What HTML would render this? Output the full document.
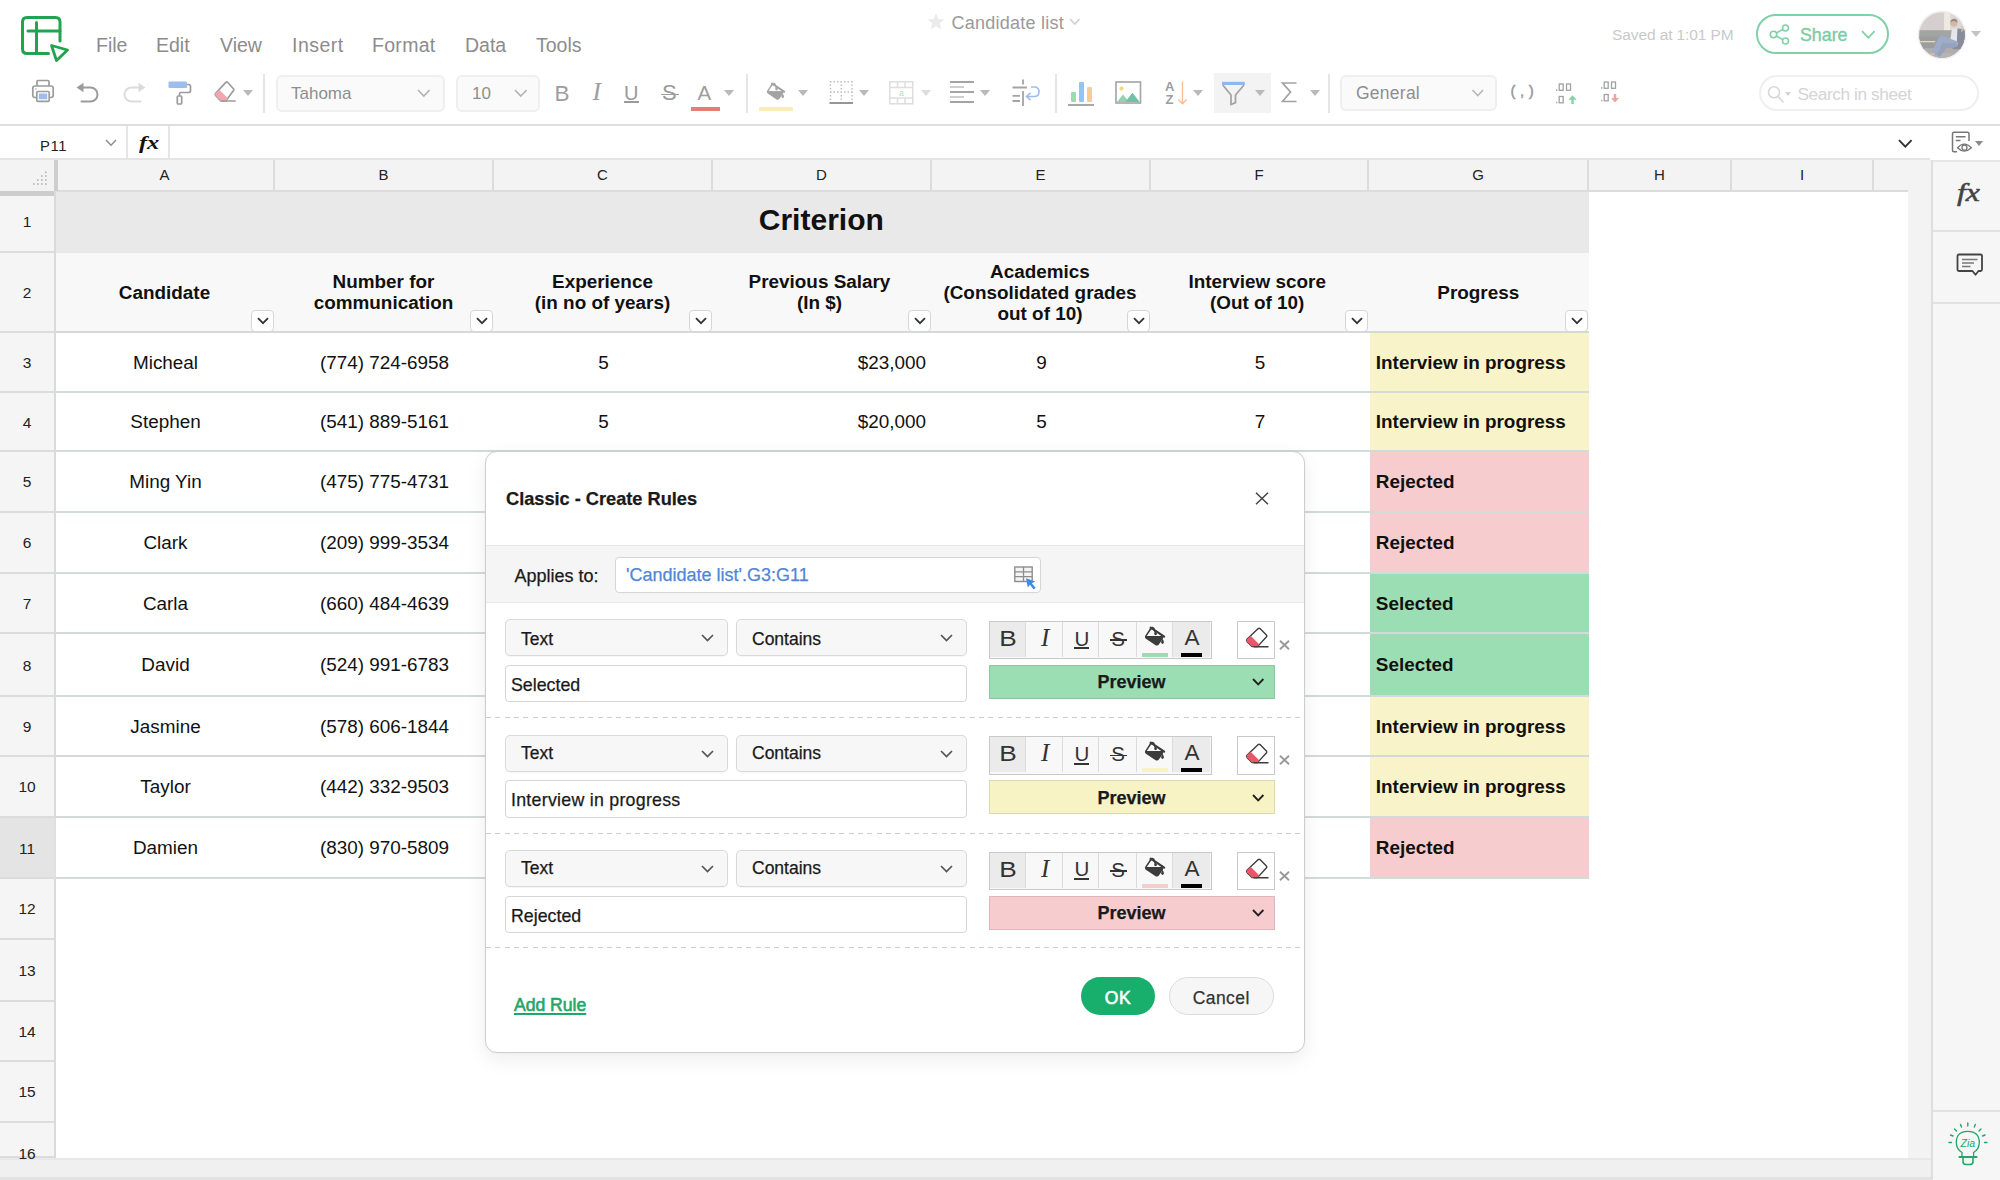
<!DOCTYPE html>
<html lang="en">
<head>
<meta charset="utf-8">
<title>Candidate list</title>
<style>
*{box-sizing:border-box;margin:0;padding:0}
html,body{width:2000px;height:1180px;overflow:hidden;background:#fff}
body{font-family:"Liberation Sans",sans-serif;color:#111;position:relative}
.abs{position:absolute}
#page{position:absolute;left:0;top:0;width:2000px;height:1180px;overflow:hidden;background:#fff}
svg{display:block;overflow:visible}
/* top bar */
#topbar{position:absolute;left:0;top:0;width:2000px;height:126px;background:#fff;border-bottom:2px solid #dedede}
.menu{position:absolute;top:33px;font-size:19.5px;line-height:24px;color:#8c8c8c;white-space:nowrap}
.tri{position:absolute;width:0;height:0;border-left:5px solid transparent;border-right:5px solid transparent;border-top:6px solid #b9b9b9}
.vsep{position:absolute;width:2px;background:#e6e6e6}
/* formula bar */
#fbar{position:absolute;left:0;top:126px;width:1932px;height:34px;background:#fff;border-bottom:2px solid #e4e4e4}
/* column headers */
#colhdr{position:absolute;left:0;top:160px;width:1908px;height:32px;background:#f3f3f3;border-bottom:2px solid #dcdcdc}
.ch{position:absolute;top:0;height:30px;line-height:29px;text-align:center;font-size:15px;color:#222;border-right:2px solid #dcdcdc}
/* row headers */
.rh{position:absolute;left:0;width:56px;background:#f5f5f5;border-bottom:2px solid #dcdcdc;border-right:2px solid #dadada;font-size:15.5px;color:#222}
.rh span{position:absolute;left:0;width:54px;text-align:center;line-height:20px}
/* cells */
.c{position:absolute;font-size:18.9px;white-space:nowrap;color:#111;line-height:22px}
.cc{text-align:center}
.b{font-weight:bold}
.hl{position:absolute;height:2px;background:#d3dada}
.fb{position:absolute;width:23px;height:22px;background:#fff;border:1px solid #d6d6d6;border-radius:4px}
.fb svg{position:absolute;left:4.500px;top:6px}
</style>
</head>
<body>
<div id="page">
<!-- scroll strips / side panel -->
<div class="abs" style="left:1908px;top:160px;width:24px;height:998px;background:#f3f3f3"></div>
<div class="abs" style="left:0;top:1158px;width:1932px;height:22px;background:#f0f0f0;border-top:2px solid #e8e8e8"></div>
<div class="abs" style="left:0;top:1177px;width:1932px;height:3px;background:#e2e2e2"></div>
<div id="side" class="abs" style="left:1931px;top:160px;width:69px;height:1020px;background:#f6f6f6;border-left:2px solid #dedede">
  <div class="abs" style="left:0;top:0;width:67px;height:2px;background:#e6e6e6"></div>
  <div class="abs" style="left:0;top:70px;width:67px;height:2px;background:#e2e2e2"></div>
  <div class="abs" style="left:0;top:142px;width:67px;height:2px;background:#e2e2e2"></div>
  <div class="abs" style="left:0;top:950px;width:67px;height:2px;background:#e2e2e2"></div>
  <!-- fx -->
  <div class="abs" style="left:24px;top:16px;font-family:'Liberation Serif',serif;font-style:italic;font-size:24.500px;line-height:34px;color:#444;letter-spacing:0;white-space:nowrap;transform:scaleX(1.3);transform-origin:0 50%;-webkit-text-stroke:.5px #444">fx</div>
  <!-- comment -->
  <svg class="abs" style="left:23px;top:93px" width="28" height="25" viewBox="0 0 28 25" fill="none" stroke="#444" stroke-width="1.800" stroke-linejoin="round">
  <path d="M3 1.500 H24.500 Q26 1.500 26 3 V16.500 Q26 18 24.500 18 H22.500 L19.500 21.800 L16.500 18 H3 Q1.500 18 1.500 16.500 V3 Q1.500 1.500 3 1.500 Z"/>
  <path d="M6 6.500 H21.500" stroke="#777" stroke-width="1.500"/><path d="M6 10 H18" stroke="#777" stroke-width="1.500"/><path d="M6 13.500 H14.500" stroke="#777" stroke-width="1.500"/>
  </svg>
  <!-- zia bulb -->
  <svg class="abs" style="left:14px;top:961px" width="44" height="48" viewBox="0 0 44 48" fill="none" stroke="#1fa866" stroke-width="1.300" stroke-linecap="round">
  <path d="M15 34.500 V31.500 Q9.300 28 9.300 21.500 Q9.300 10.300 20.800 10.300 Q32.300 10.300 32.300 21.500 Q32.300 28 26.600 31.500 V34.500"/>
  <path d="M12.500 36 H29.500" stroke-width="2.200"/>
  <path d="M16 37 V40.500 Q16 43.500 19 43.500 H23 Q26 43.500 26 40.500 V37" stroke-width="1.600"/>
  <path d="M20.800 2 V5 M13.500 3.500 L14.500 6 M28.300 3.500 L27.300 6 M7.500 8 L9.500 10 M34 8 L32 10 M3.500 14 L6 15 M38 14 L35.500 15 M2 21.500 H4.500 M37.500 21.500 H40" stroke-width="1.400"/>
  <text x="20.800" y="25.500" font-size="10.500" text-anchor="middle" fill="#1fa866" stroke="none" style="font-family:'Liberation Sans',sans-serif;font-style:italic">Zia</text>
  </svg>
</div>
<div id="grid">
<div class="abs" style="left:56px;top:192px;width:1533px;height:60.500px;background:#e9e9e9"></div>
<div class="abs" style="left:56px;top:252.500px;width:1533px;height:78px;background:#f8f8f8"></div>
<div class="abs" style="left:1370px;top:332.5px;width:219px;height:58.5px;background:#f8f3c8"></div>
<div class="abs" style="left:1370px;top:393px;width:219px;height:57px;background:#f8f3c8"></div>
<div class="abs" style="left:1370px;top:452px;width:219px;height:58.5px;background:#f6cccf"></div>
<div class="abs" style="left:1370px;top:512.5px;width:219px;height:59.0px;background:#f6cccf"></div>
<div class="abs" style="left:1370px;top:573.5px;width:219px;height:58.5px;background:#9cdeb4"></div>
<div class="abs" style="left:1370px;top:634px;width:219px;height:61px;background:#9cdeb4"></div>
<div class="abs" style="left:1370px;top:697px;width:219px;height:58px;background:#f8f3c8"></div>
<div class="abs" style="left:1370px;top:757px;width:219px;height:58.700000000000045px;background:#f8f3c8"></div>
<div class="abs" style="left:1370px;top:817.7px;width:219px;height:59.299999999999955px;background:#f6cccf"></div>
<div class="hl" style="left:56px;top:330.5px;width:1533px"></div>
<div class="hl" style="left:56px;top:391px;width:1533px"></div>
<div class="hl" style="left:56px;top:450px;width:1533px"></div>
<div class="hl" style="left:56px;top:510.5px;width:1533px"></div>
<div class="hl" style="left:56px;top:571.5px;width:1533px"></div>
<div class="hl" style="left:56px;top:632px;width:1533px"></div>
<div class="hl" style="left:56px;top:695px;width:1533px"></div>
<div class="hl" style="left:56px;top:755px;width:1533px"></div>
<div class="hl" style="left:56px;top:815.7px;width:1533px"></div>
<div class="hl" style="left:56px;top:877px;width:1533px"></div>
<div id="colhdr">
<div class="ch" style="left:56px;width:219px">A</div>
<div class="ch" style="left:275px;width:219px">B</div>
<div class="ch" style="left:494px;width:219px">C</div>
<div class="ch" style="left:713px;width:219px">D</div>
<div class="ch" style="left:932px;width:219px">E</div>
<div class="ch" style="left:1151px;width:218px">F</div>
<div class="ch" style="left:1369px;width:220px">G</div>
<div class="ch" style="left:1589px;width:143px">H</div>
<div class="ch" style="left:1732px;width:142px">I</div>
<div class="abs" style="left:0;top:0;width:54px;height:31px;background:#f3f3f3"></div>
<div class="abs" style="left:54px;top:0;width:4px;height:31px;background:#cdcdcd"></div>
<svg class="abs" style="left:0;top:0" width="56" height="32" viewBox="0 0 56 32" fill="#b4b4b4"><rect x="45" y="11.5" width="1.600" height="1.600"/><rect x="45" y="15.2" width="1.600" height="1.600"/><rect x="41" y="15.2" width="1.600" height="1.600"/><rect x="45" y="19.2" width="1.600" height="1.600"/><rect x="41" y="19.2" width="1.600" height="1.600"/><rect x="37" y="19.2" width="1.600" height="1.600"/><rect x="45" y="23.2" width="1.600" height="1.600"/><rect x="41" y="23.2" width="1.600" height="1.600"/><rect x="37" y="23.2" width="1.600" height="1.600"/><rect x="33" y="23.2" width="1.600" height="1.600"/></svg>
</div>
<div class="rh" style="top:192px;height:61px"><span style="top:20px">1</span></div>
<div class="rh" style="top:253px;height:79.5px"><span style="top:30px">2</span></div>
<div class="rh" style="top:332.5px;height:60.5px"><span style="top:20px">3</span></div>
<div class="rh" style="top:393px;height:59px"><span style="top:20px">4</span></div>
<div class="rh" style="top:452px;height:60.5px"><span style="top:20px">5</span></div>
<div class="rh" style="top:512.5px;height:61.0px"><span style="top:20px">6</span></div>
<div class="rh" style="top:573.5px;height:60.5px"><span style="top:20px">7</span></div>
<div class="rh" style="top:634px;height:63px"><span style="top:22px">8</span></div>
<div class="rh" style="top:697px;height:60px"><span style="top:20px">9</span></div>
<div class="rh" style="top:757px;height:60.700000000000045px"><span style="top:20px">10</span></div>
<div class="rh" style="top:817.7px;height:61.299999999999955px;background:#e4e4e4;border-right-color:#e0e0e0"><span style="top:21px">11</span></div>
<div class="rh" style="top:879px;height:60.60000000000002px"><span style="top:20px">12</span></div>
<div class="rh" style="top:939.6px;height:62.10000000000002px"><span style="top:21px">13</span></div>
<div class="rh" style="top:1001.7px;height:60.700000000000045px"><span style="top:20px">14</span></div>
<div class="rh" style="top:1062.4px;height:60.59999999999991px"><span style="top:20px">15</span></div>
<div class="rh" style="top:1123px;height:35px"><span style="top:21px">16</span></div>
<div class="abs" style="left:0;top:191px;width:54px;height:5px;background:#cdcdcd"></div>
<div class="c b cc" style="left:54.800px;width:1533px;top:203px;font-size:30px;line-height:34px">Criterion</div>
<div class="c b cc" style="left:35px;width:259px;top:281.6px;line-height:21px">Candidate</div>
<div class="fb" style="left:251px;top:310px"><svg width="12" height="8" viewBox="0 0 12 8"><path d="M1 1.2 L6 6.2 L11 1.2" fill="none" stroke="#333" stroke-width="1.8"/></svg></div>
<div class="c b cc" style="left:254px;width:259px;top:271.1px;line-height:21px">Number for<br>communication</div>
<div class="fb" style="left:470px;top:310px"><svg width="12" height="8" viewBox="0 0 12 8"><path d="M1 1.2 L6 6.2 L11 1.2" fill="none" stroke="#333" stroke-width="1.8"/></svg></div>
<div class="c b cc" style="left:473px;width:259px;top:271.1px;line-height:21px">Experience<br>(in no of years)</div>
<div class="fb" style="left:689px;top:310px"><svg width="12" height="8" viewBox="0 0 12 8"><path d="M1 1.2 L6 6.2 L11 1.2" fill="none" stroke="#333" stroke-width="1.8"/></svg></div>
<div class="c b cc" style="left:690px;width:259px;top:271.1px;line-height:21px">Previous Salary<br>(In $)</div>
<div class="fb" style="left:908px;top:310px"><svg width="12" height="8" viewBox="0 0 12 8"><path d="M1 1.2 L6 6.2 L11 1.2" fill="none" stroke="#333" stroke-width="1.8"/></svg></div>
<div class="c b cc" style="left:910.5px;width:259px;top:260.6px;line-height:21px">Academics<br>(Consolidated grades<br>out of 10)</div>
<div class="fb" style="left:1127px;top:310px"><svg width="12" height="8" viewBox="0 0 12 8"><path d="M1 1.2 L6 6.2 L11 1.2" fill="none" stroke="#333" stroke-width="1.8"/></svg></div>
<div class="c b cc" style="left:1128.2px;width:258px;top:271.1px;line-height:21px">Interview score<br>(Out of 10)</div>
<div class="fb" style="left:1345px;top:310px"><svg width="12" height="8" viewBox="0 0 12 8"><path d="M1 1.2 L6 6.2 L11 1.2" fill="none" stroke="#333" stroke-width="1.8"/></svg></div>
<div class="c b cc" style="left:1348.3px;width:260px;top:281.6px;line-height:21px">Progress</div>
<div class="fb" style="left:1565px;top:310px"><svg width="12" height="8" viewBox="0 0 12 8"><path d="M1 1.2 L6 6.2 L11 1.2" fill="none" stroke="#333" stroke-width="1.8"/></svg></div>
<div class="c cc" style="left:56px;width:219px;top:351.6px">Micheal</div>
<div class="c cc" style="left:275px;width:219px;top:351.6px">(774) 724-6958</div>
<div class="c cc" style="left:494px;width:219px;top:351.6px">5</div>
<div class="c" style="left:713px;width:213px;top:351.6px;text-align:right">$23,000</div>
<div class="c cc" style="left:932px;width:219px;top:351.6px">9</div>
<div class="c cc" style="left:1151px;width:218px;top:351.6px">5</div>
<div class="c b" style="left:1375.800px;top:351.6px">Interview in progress</div>
<div class="c cc" style="left:56px;width:219px;top:411.3px">Stephen</div>
<div class="c cc" style="left:275px;width:219px;top:411.3px">(541) 889-5161</div>
<div class="c cc" style="left:494px;width:219px;top:411.3px">5</div>
<div class="c" style="left:713px;width:213px;top:411.3px;text-align:right">$20,000</div>
<div class="c cc" style="left:932px;width:219px;top:411.3px">5</div>
<div class="c cc" style="left:1151px;width:218px;top:411.3px">7</div>
<div class="c b" style="left:1375.800px;top:411.3px">Interview in progress</div>
<div class="c cc" style="left:56px;width:219px;top:471.1px">Ming Yin</div>
<div class="c cc" style="left:275px;width:219px;top:471.1px">(475) 775-4731</div>
<div class="c b" style="left:1375.800px;top:471.1px">Rejected</div>
<div class="c cc" style="left:56px;width:219px;top:531.8px">Clark</div>
<div class="c cc" style="left:275px;width:219px;top:531.8px">(209) 999-3534</div>
<div class="c b" style="left:1375.800px;top:531.8px">Rejected</div>
<div class="c cc" style="left:56px;width:219px;top:592.5px">Carla</div>
<div class="c cc" style="left:275px;width:219px;top:592.5px">(660) 484-4639</div>
<div class="c b" style="left:1375.800px;top:592.5px">Selected</div>
<div class="c cc" style="left:56px;width:219px;top:654.3px">David</div>
<div class="c cc" style="left:275px;width:219px;top:654.3px">(524) 991-6783</div>
<div class="c b" style="left:1375.800px;top:654.3px">Selected</div>
<div class="c cc" style="left:56px;width:219px;top:715.8px">Jasmine</div>
<div class="c cc" style="left:275px;width:219px;top:715.8px">(578) 606-1844</div>
<div class="c b" style="left:1375.800px;top:715.8px">Interview in progress</div>
<div class="c cc" style="left:56px;width:219px;top:776.1px">Taylor</div>
<div class="c cc" style="left:275px;width:219px;top:776.1px">(442) 332-9503</div>
<div class="c b" style="left:1375.800px;top:776.1px">Interview in progress</div>
<div class="c cc" style="left:56px;width:219px;top:837.1px">Damien</div>
<div class="c cc" style="left:275px;width:219px;top:837.1px">(830) 970-5809</div>
<div class="c b" style="left:1375.800px;top:837.1px">Rejected</div>
</div>
<div id="topbar">
<!-- logo -->
<svg class="abs" style="left:18px;top:12px" width="56" height="54" viewBox="0 0 56 54" fill="none" stroke="#22a350" stroke-width="3" stroke-linecap="round" stroke-linejoin="round">
<path d="M30.5 41.5 H9 Q4.5 41.5 4.500 37 V10 Q4.5 5.500 9 5.500 H37.500 Q42 5.500 42 10 V29"/>
<path d="M18.500 10.500 V41"/><path d="M10 19 H42"/>
<path d="M33.500 33.500 L49.500 38 L38.500 48.500 Z" stroke-width="2.800"/>
</svg>
<!-- menus -->
<div class="menu" style="left:96px">File</div>
<div class="menu" style="left:156px">Edit</div>
<div class="menu" style="left:220px">View</div>
<div class="menu" style="left:292px;letter-spacing:.5px">Insert</div>
<div class="menu" style="left:372px;letter-spacing:.3px">Format</div>
<div class="menu" style="left:465px">Data</div>
<div class="menu" style="left:536px">Tools</div>
<!-- title -->
<svg class="abs" style="left:927px;top:13px" width="18" height="17" viewBox="0 0 18 17"><path d="M9 0.500 L11.400 6 L17.500 6.500 L12.900 10.400 L14.300 16.300 L9 13.200 L3.700 16.300 L5.100 10.400 L0.500 6.500 L6.600 6 Z" fill="#ebebeb"/></svg>
<div class="abs" style="left:951.500px;top:10.600px;font-size:18px;line-height:24px;color:#9a9a9a;white-space:nowrap;letter-spacing:.25px">Candidate list</div>
<svg class="abs" style="left:1069px;top:18px" width="12" height="8" viewBox="0 0 12 8"><path d="M1 1 L5.800 6 L10.600 1" fill="none" stroke="#cfcfcf" stroke-width="1.600"/></svg>
<!-- saved -->
<div class="abs" style="left:1612px;top:24px;font-size:15.500px;line-height:22px;color:#c9c9c9;white-space:nowrap;letter-spacing:-.1px">Saved at 1:01 PM</div>
<!-- share -->
<div class="abs" style="left:1756px;top:14px;width:133px;height:40px;border:2px solid #80d0a8;border-radius:20px;background:#fff"></div>
<svg class="abs" style="left:1769px;top:24px" width="22" height="21" viewBox="0 0 22 21" fill="none" stroke="#80d0a8" stroke-width="1.600"><circle cx="4.500" cy="10.500" r="3.200"/><circle cx="16.500" cy="4" r="3"/><circle cx="16.500" cy="17" r="3"/><path d="M7.300 9 L13.800 5.400 M7.300 12 L13.800 15.600"/></svg>
<div class="abs" style="left:1800px;top:23.200px;font-size:17.800px;line-height:24px;color:#7ccda4;white-space:nowrap;letter-spacing:0;-webkit-text-stroke:.4px #7ccda4">Share</div>
<svg class="abs" style="left:1861px;top:30px" width="15" height="10" viewBox="0 0 15 10"><path d="M1 1.200 L7.300 7.800 L13.600 1.200" fill="none" stroke="#80d0a8" stroke-width="1.800"/></svg>
<!-- avatar -->
<svg class="abs" style="left:1917px;top:10px" width="50" height="50" viewBox="-2.200 -2.200 50 50">
<defs><clipPath id="avc"><circle cx="22.800" cy="22.800" r="22.800"/></clipPath></defs>
<circle cx="22.800" cy="22.800" r="24.300" fill="#efefef"/>
<g clip-path="url(#avc)">
<rect x="0" y="0" width="46" height="46" fill="#cdc5c6"/>
<rect x="24.900" y="0" width="6.500" height="20" fill="#ece6da"/>
<rect x="31.400" y="0" width="15" height="20" fill="#d6d0cc"/>
<rect x="0" y="18" width="46" height="19" fill="#8e9290"/>
<rect x="0" y="24" width="24" height="13" fill="#858988"/>
<rect x="0" y="36" width="46" height="10" fill="#9f9d9c"/>
<rect x="0" y="41" width="46" height="5" fill="#a8a5a3"/>
<path d="M0 29.400 H16" stroke="#e6cfb8" stroke-width="1.300"/>
<path d="M38 16.300 L46 17 V37 H33 L37.400 30 Z" fill="#6f7585"/>
<path d="M32.600 17.200 L38.200 16.300 L37.600 30.500 L31.200 27.500 Z" fill="#e3e1ea"/>
<path d="M36 31.500 L22.500 26.500 L15.500 40.500" stroke="#8a9abb" stroke-width="6" fill="none" stroke-linejoin="round" stroke-linecap="round"/>
<path d="M35 33 L26 33.500 L20 42" stroke="#7f8fb2" stroke-width="4.500" fill="none" stroke-linejoin="round" stroke-linecap="round"/>
<ellipse cx="13.200" cy="42" rx="2.600" ry="1.500" fill="#d4a78c"/>
<circle cx="34.600" cy="11" r="3.600" fill="#c9a898"/>
<path d="M31 10 Q32 6 35.500 6.500 Q38.500 7 38.200 10.500 Q36 8.500 33.500 9 Z" fill="#86705f"/>
<path d="M42.500 13 L44.500 18 L42 20 Z" fill="#d6ab93"/>
<rect x="0" y="0" width="46" height="46" fill="#fff" opacity=".18"/>
</g>
</svg>
<div class="tri" style="left:1971px;top:31px;border-top-color:#c4c4c4"></div>
</div>
<div id="toolbar" class="abs" style="left:0;top:0;width:2000px;height:124px">
<!-- print -->
<svg class="abs" style="left:31px;top:79px" width="24" height="24" viewBox="0 0 24 24" fill="none" stroke="#9c9c9c" stroke-width="1.700" stroke-linejoin="round">
<path d="M6 7 V2.500 Q6 1.500 7 1.500 H17 Q18 1.500 18 2.500 V7"/>
<rect x="1.800" y="7" width="20.400" height="11.500" rx="2.200"/>
<rect x="5.800" y="12.500" width="12.400" height="9.800" rx="1" fill="#fff"/>
<rect x="7.800" y="14.500" width="8.400" height="5.800" fill="#9dbdee" stroke="none"/>
<path d="M4.500 10 h1" stroke-width="1.400"/>
</svg>
<!-- undo -->
<svg class="abs" style="left:75px;top:80px" width="26" height="24" viewBox="0 0 26 24" fill="none" stroke="#9c9c9c" stroke-width="2">
<path d="M5 7.500 H15.500 A7 7 0 0 1 15.500 21.500 H6.500" stroke-linecap="round"/>
<path d="M1.500 7.500 L8.500 2.800 V12.200 Z" fill="#9c9c9c" stroke="none"/>
</svg>
<!-- redo -->
<svg class="abs" style="left:121px;top:80px" width="26" height="24" viewBox="0 0 26 24" fill="none" stroke="#dcdcdc" stroke-width="2">
<path d="M21 7.500 H10.500 A7 7 0 0 0 10.500 21.500 H19.500" stroke-linecap="round"/>
<path d="M24.500 7.500 L17.500 2.800 V12.200 Z" fill="#dcdcdc" stroke="none"/>
</svg>
<!-- paint roller -->
<svg class="abs" style="left:167px;top:80px" width="26" height="26" viewBox="0 0 26 26" fill="none" stroke="#9c9c9c" stroke-width="1.700" stroke-linejoin="round">
<rect x="1.500" y="1.500" width="18.500" height="6.500" rx="1" fill="#9dbdee" stroke="none"/>
<path d="M20 4.500 H21.500 Q23.500 4.500 23.500 6.500 V10.500 Q23.500 12.500 21.500 12.500 H14 Q12.500 12.500 12.500 14 V16"/>
<rect x="10.300" y="16" width="4.400" height="8" rx="1"/>
</svg>
<!-- eraser -->
<svg class="abs" style="left:213px;top:80px" width="24" height="24" viewBox="0 0 24 24" fill="none" stroke="#9c9c9c" stroke-width="1.700" stroke-linejoin="round">
<path d="M12.800 2.300 L2.600 13.300 Q1.700 14.400 2.600 15.400 L7.800 20.800 H13 L20.500 10.600 Q21.300 9.600 20.400 8.700 L14.600 2.300 Q13.700 1.500 12.800 2.300 Z" fill="#fff"/>
<path d="M6.300 9.800 L14.800 18.200 L13 20.800 H7.800 L2.600 15.400 Q1.700 14.400 2.600 13.300 Z" fill="#f2a6ae" stroke="none"/>
<path d="M9 21 H22" stroke-linecap="round"/>
</svg>
<div class="tri" style="left:243px;top:90px"></div>
<div class="vsep" style="left:263px;top:74px;height:39px"></div>
<!-- font box -->
<div class="abs" style="left:276px;top:75px;width:169px;height:37px;border:2px solid #efefef;border-radius:6px;background:#fafafa"></div>
<div class="abs" style="left:291px;top:82.600px;font-size:17px;line-height:22px;color:#8e8e8e;white-space:nowrap">Tahoma</div>
<svg class="abs" style="left:417px;top:89px" width="14" height="9" viewBox="0 0 14 9"><path d="M1 1 L6.800 7 L12.600 1" fill="none" stroke="#b4b4b4" stroke-width="1.700"/></svg>
<!-- size box -->
<div class="abs" style="left:456px;top:75px;width:84px;height:37px;border:2px solid #efefef;border-radius:6px;background:#fafafa"></div>
<div class="abs" style="left:472px;top:82.600px;font-size:17px;line-height:22px;color:#8e8e8e;white-space:nowrap">10</div>
<svg class="abs" style="left:514px;top:89px" width="14" height="9" viewBox="0 0 14 9"><path d="M1 1 L6.800 7 L12.600 1" fill="none" stroke="#b4b4b4" stroke-width="1.700"/></svg>
<!-- B I U S A -->
<div class="abs" style="left:554.500px;top:79.500px;font-size:22.500px;line-height:28px;color:#9d9d9d">B</div>
<div class="abs" style="left:592.500px;top:78px;font-size:25.500px;line-height:28px;color:#9d9d9d;font-family:'Liberation Serif',serif;font-style:italic">I</div>
<div class="abs" style="left:624px;top:81px;font-size:20px;line-height:24px;color:#9a9a9a">U</div>
<div class="abs" style="left:624px;top:101px;width:15px;height:2px;background:#9a9a9a"></div>
<div class="abs" style="left:662px;top:80px;font-size:22px;line-height:26px;color:#9a9a9a">S</div>
<div class="abs" style="left:661px;top:93.500px;width:17.500px;height:1.300px;background:#9d9d9d"></div>
<div class="abs" style="left:697.500px;top:79.700px;font-size:20.500px;line-height:26px;color:#9d9d9d">A</div>
<div class="abs" style="left:691px;top:107px;width:29px;height:4px;background:#e67c7c"></div>
<div class="tri" style="left:724px;top:90px"></div>
<div class="vsep" style="left:746px;top:74px;height:39px"></div>
</div>
<div id="toolbar2" class="abs" style="left:0;top:0;width:2000px;height:124px">
<!-- paint bucket -->
<svg class="abs" style="left:767px;top:82.800px" width="21.600" height="19.800" viewBox="0 0 24 22" fill="none">
<defs><clipPath id="bk1"><rect x="-7.400" y="-5.400" width="14.800" height="11" rx="2" transform="translate(9.300 9.700) rotate(34)"/></clipPath></defs>
<rect x="0" y="9" width="24" height="13" fill="#a3a3a3" clip-path="url(#bk1)"/>
<rect x="-7.400" y="-5.400" width="14.800" height="11" rx="2" transform="translate(9.300 9.700) rotate(34)" stroke="#a3a3a3" stroke-width="1.600"/>
<path d="M-8.200 -5.600 H8.200" transform="translate(9.300 9.700) rotate(34)" stroke="#a3a3a3" stroke-width="2.100" stroke-linecap="round"/>
<path d="M5.200 1.800 Q6.800 -0.600 8.800 1.200 L10.600 6.400" stroke="#a3a3a3" stroke-width="1.500" stroke-linecap="round"/>
<circle cx="10.600" cy="6.800" r="1.400" fill="#a3a3a3"/>
<path d="M17.500 11.800 Q20.400 16.200 17.500 17 Q14.600 16.200 17.500 11.800 Z" fill="#a3a3a3"/>
</svg>
<div class="abs" style="left:759px;top:107px;width:34px;height:3.500px;background:#fcedb8"></div>
<div class="tri" style="left:798px;top:90px"></div>
<!-- borders -->
<svg class="abs" style="left:829px;top:80px" width="25" height="25" viewBox="0 0 25 25" fill="none" stroke="#bdbdbd" stroke-width="1.400">
<path d="M1.500 1 V22 M23 1 V22 M12.300 1 V22 M1 1.700 H24 M1 12 H24" stroke-dasharray="1.500 2"/>
<path d="M0.500 23 H24" stroke="#919191" stroke-width="1.900"/>
</svg>
<div class="tri" style="left:859px;top:90px"></div>
<!-- merge -->
<svg class="abs" style="left:889px;top:81px" width="25" height="24" viewBox="0 0 25 24" fill="none" stroke="#dedede" stroke-width="1.500">
<rect x="0.800" y="0.800" width="23" height="22"/>
<path d="M0.800 6.500 H23.800 M0.800 17 H23.800 M8.500 0.800 V6.500 M16 0.800 V6.500 M8.500 17 V22.800 M16 17 V22.800"/>
<text x="12.300" y="14.800" font-size="8.500" text-anchor="middle" fill="#a9dfc0" stroke="none" style="font-family:'Liberation Sans',sans-serif">a</text>
</svg>
<div class="tri" style="left:921px;top:90px;border-top-color:#dcdcdc"></div>
<!-- align -->
<div class="abs" style="left:950px;top:81px;width:24px;height:2px;background:#a4a4a4"></div>
<div class="abs" style="left:950px;top:86px;width:14px;height:2px;background:#cdcdcd"></div>
<div class="abs" style="left:950px;top:91px;width:24px;height:2px;background:#a4a4a4"></div>
<div class="abs" style="left:950px;top:96px;width:14px;height:2px;background:#cdcdcd"></div>
<div class="abs" style="left:950px;top:101px;width:24px;height:2px;background:#a4a4a4"></div>
<div class="tri" style="left:980px;top:90px"></div>
<!-- wrap -->
<svg class="abs" style="left:1011px;top:78px" width="30" height="29" viewBox="0 0 30 29" fill="none" stroke="#a4a4a4" stroke-width="1.800">
<path d="M12 1.500 V6.500 M12 13 V28"/>
<path d="M1.500 9.500 H16 M1.500 17.800 H9 M1.500 23 H9"/>
<path d="M20 9 H23 Q28 9 28 13.700 Q28 18.500 23 18.500 H16" stroke="#9dbdee" stroke-width="1.600"/>
<path d="M19.500 14.800 L15.500 18.500 L19.500 22.200" stroke="#9dbdee" stroke-width="1.600"/>
</svg>
<div class="vsep" style="left:1055px;top:74px;height:39px"></div>
<!-- chart -->
<div class="abs" style="left:1071px;top:92px;width:5px;height:10px;background:#9bdcae;border-radius:1px"></div>
<div class="abs" style="left:1079px;top:82px;width:5px;height:20px;background:#93c4f5;border-radius:1px"></div>
<div class="abs" style="left:1087px;top:87px;width:5px;height:15px;background:#f8cd94;border-radius:1px"></div>
<div class="abs" style="left:1068px;top:104px;width:26px;height:2px;background:#a8a8a8"></div>
<!-- image -->
<svg class="abs" style="left:1115px;top:81px" width="27" height="23" viewBox="0 0 27 23" fill="none">
<rect x="1" y="1" width="24.500" height="21" stroke="#a8a8a8" stroke-width="1.700"/>
<circle cx="6.500" cy="7.500" r="2" fill="#f7d774"/>
<path d="M2 21 L8 13.500 L12 18.500 L17.500 12 L24.500 21 Z" fill="#8fd3b0"/>
<path d="M10.500 21 L17.500 12 L24.500 21 Z" fill="#6cc3a6"/>
</svg>
<!-- AZ sort -->
<div class="abs" style="left:1165px;top:80px;font-size:13px;line-height:13px;font-weight:bold;color:#9c9c9c">A</div>
<div class="abs" style="left:1165.500px;top:93px;font-size:13px;line-height:13px;font-weight:bold;color:#9c9c9c">Z</div>
<svg class="abs" style="left:1177px;top:81px" width="11" height="24" viewBox="0 0 11 24" fill="none" stroke="#f6bd92" stroke-width="1.300"><path d="M5.500 0.500 V22.500 M1.300 18.500 L5.500 22.800 L9.700 18.500"/></svg>
<div class="tri" style="left:1193px;top:90px"></div>
<!-- filter -->
<div class="abs" style="left:1214px;top:73px;width:57px;height:40px;background:#f3f3f3"></div>
<svg class="abs" style="left:1221px;top:81px" width="25" height="26" viewBox="0 0 25 26" fill="none">
<rect x="1" y="0.800" width="22.800" height="3.200" fill="#8fb7f2"/>
<path d="M1.800 4 L10 14 V23.500 L14.500 21.600 V14 L23 4" stroke="#a2a2a2" stroke-width="1.700" stroke-linejoin="miter"/>
</svg>
<div class="tri" style="left:1255px;top:90px"></div>
<!-- sigma -->
<svg class="abs" style="left:1280px;top:81px" width="18" height="22" viewBox="0 0 18 22" fill="none" stroke="#a2a2a2" stroke-width="1.700"><path d="M16.500 2 H2.500 L10.500 11 L2.500 20.500 H16.500"/></svg>
<div class="tri" style="left:1310px;top:90px"></div>
<div class="vsep" style="left:1328px;top:74px;height:39px"></div>
<!-- general box -->
<div class="abs" style="left:1340px;top:75px;width:157px;height:36px;border:2px solid #efefef;border-radius:6px;background:#fafafa"></div>
<div class="abs" style="left:1356px;top:82px;font-size:17.500px;line-height:22px;color:#8e8e8e;white-space:nowrap;letter-spacing:.25px">General</div>
<svg class="abs" style="left:1471px;top:89px" width="14" height="9" viewBox="0 0 14 9"><path d="M1.500 1 L6.800 6.600 L12.100 1" fill="none" stroke="#b8b8b8" stroke-width="1.600"/></svg>
<!-- (,) -->
<div class="abs" style="left:1510.500px;top:81px;font-size:15px;line-height:20px;color:#959595;white-space:nowrap;letter-spacing:.2px;-webkit-text-stroke:.4px #959595">( , )</div>
<!-- decimals -->
<svg class="abs" style="left:1555px;top:82px" width="24" height="24" viewBox="0 0 24 24" fill="none" stroke="#a2a2a2" stroke-width="1.300">
<rect x="4.200" y="2" width="4" height="6.300"/><rect x="11.500" y="2" width="4" height="6.300"/><rect x="4.200" y="14.500" width="4" height="6.300"/>
<path d="M1 8 h1.300 M1 20.500 h1.300"/>
<path d="M17.500 22 V16" stroke="#84d3a4" stroke-width="2.400"/><path d="M13.300 17.800 L17.500 13.300 L21.700 17.800 Z" fill="#84d3a4" stroke="none"/>
</svg>
<svg class="abs" style="left:1600px;top:80px" width="24" height="24" viewBox="0 0 24 24" fill="none" stroke="#a2a2a2" stroke-width="1.300">
<rect x="4.200" y="2" width="4" height="6.300"/><rect x="11.500" y="2" width="4" height="6.300"/><rect x="4.200" y="14.500" width="4" height="6.300"/>
<path d="M1 8 h1.300 M1 20.500 h1.300"/>
<path d="M15 14 V19" stroke="#f3a0a0" stroke-width="2.400"/><path d="M11 18 L15 22.500 L19 18 Z" fill="#f3a0a0" stroke="none"/>
</svg>
<!-- search -->
<div class="abs" style="left:1759px;top:75px;width:220px;height:36px;border:2px solid #efefef;border-radius:18px;background:#fff"></div>
<svg class="abs" style="left:1767px;top:85px" width="18" height="18" viewBox="0 0 18 18" fill="none" stroke="#d8d8d8" stroke-width="1.600"><circle cx="7" cy="7.300" r="5.500"/><path d="M11 11.500 L16 17" stroke-linecap="round"/></svg>
<div class="tri" style="left:1785px;top:92px;border-left-width:3px;border-right-width:3px;border-top-width:4px;border-top-color:#d4d4d4"></div>
<div class="abs" style="left:1797.500px;top:83.300px;font-size:17.300px;line-height:22px;color:#d4d4d4;white-space:nowrap;letter-spacing:-.42px">Search in sheet</div>
</div>
<div id="fbar">
<div class="abs" style="left:40px;top:9.500px;font-size:14.800px;line-height:20px;color:#222;white-space:nowrap;letter-spacing:.6px">P11</div>
<svg class="abs" style="left:105px;top:13px" width="12" height="8" viewBox="0 0 12 8"><path d="M1 1 L6 6.200 L11 1" fill="none" stroke="#8e8e8e" stroke-width="1.500"/></svg>
<div class="abs" style="left:126px;top:0;width:2px;height:32px;background:#e6e6e6"></div>
<div class="abs" style="left:168px;top:0;width:2px;height:32px;background:#e6e6e6"></div>
<div class="abs" style="left:139px;top:3.500px;font-family:'Liberation Serif',serif;font-style:italic;font-weight:bold;font-size:19px;line-height:26px;color:#111;white-space:nowrap;letter-spacing:0;transform:scaleX(1.28);transform-origin:0 0">fx</div>
<svg class="abs" style="left:1898px;top:13px" width="15" height="10" viewBox="0 0 15 10"><path d="M1 1.200 L7.300 7.600 L13.600 1.200" fill="none" stroke="#333" stroke-width="1.900"/></svg>
</div>
<!-- side top cell -->
<div class="abs" style="left:1930px;top:126px;width:70px;height:34px;background:#fff"></div>
<svg class="abs" style="left:1951px;top:131px" width="22" height="23" viewBox="0 0 22 23" fill="none" stroke="#777" stroke-width="1.500" stroke-linejoin="round">
<path d="M6 20.800 H3 Q1.500 20.800 1.500 19.300 V2.800 Q1.500 1.300 3 1.300 H16.500 Q18 1.300 18 2.800 V10"/>
<path d="M4.800 5.800 H14.500 M4.800 9.500 H9.500" stroke-width="1.400"/>
<path d="M6.500 16.800 Q13 9.500 20.500 16.800 Q13 23.500 6.500 16.800 Z" fill="#fff" stroke-width="1.300"/>
<circle cx="13.500" cy="16.700" r="2.500" stroke-width="1.300"/>
</svg>
<div class="tri" style="left:1975px;top:141px;border-left-width:4.500px;border-right-width:4.500px;border-top-width:5.500px;border-top-color:#8a8a8a"></div>
<style>
#dlg{position:absolute;left:485px;top:451px;width:820px;height:601.500px;background:#fff;border:1.500px solid #cecece;border-radius:12px;box-shadow:0 6px 20px rgba(0,0,0,.075),0 0 2px rgba(0,0,0,.05);overflow:hidden}
#dlg .t{position:absolute;white-space:nowrap;color:#1a1a1a;-webkit-text-stroke:.25px currentColor}
.sel{position:absolute;height:37px;background:#f7f7f7;border:1.500px solid #d9d9d9;border-radius:5px;box-shadow:0 1px 1px rgba(0,0,0,.04)}
.sel .t{left:15px;top:8.200px;font-size:17.500px;line-height:22px}
.sel svg{position:absolute;right:13px;top:14px}
.inp{position:absolute;height:37.400px;background:#fff;border:1.500px solid #d6d6d6;border-radius:4px}
.inp .t{left:5px;top:8px;font-size:17.800px;line-height:22px}
.dash{position:absolute;left:0;width:818px;height:1.500px;background:repeating-linear-gradient(90deg,#cdcdcd 0,#cdcdcd 5px,transparent 5px,transparent 9.300px)}
.ftb{position:absolute;left:503px;width:223px;height:38.500px;border:1.500px solid #c9c9c9;background:#f8f8f8}
.ftb .cell{position:absolute;top:0;height:35px;border-right:1.500px solid #dcdcdc}
.ftb .g{position:absolute;color:#333;white-space:nowrap}
.erb{position:absolute;left:750.800px;width:38px;height:38.500px;border:1.500px solid #c9c9c9;background:#fff}
.pv{position:absolute;left:503px;width:286px;height:34.200px;border:1.500px solid rgba(0,0,0,.1)}
.pv .t{left:0;width:283px;text-align:center;top:5.400px;font-size:18px;line-height:22px;font-weight:bold;color:#111}
.pv svg{position:absolute;left:262px;top:12.300px}
</style>
<div id="dlg">
<div class="t" style="left:20.0px;top:34.5px;font-size:18.200px;line-height:24px;font-weight:bold">Classic - Create Rules</div>
<svg class="abs" style="left:768.5px;top:39.5px" width="14" height="13" viewBox="0 0 14 13"><path d="M1 0.800 L13 12.200 M13 0.800 L1 12.200" stroke="#444" stroke-width="1.500" fill="none"/></svg>
<div class="abs" style="left:0;top:92.8px;width:818px;height:58.200px;background:#f5f5f5;border-top:1.500px solid #e6e6e6;border-bottom:1.500px solid #e6e6e6"></div>
<div class="t" style="left:28.5px;top:113.3px;font-size:18px;line-height:22px">Applies to:</div>
<div class="inp" style="left:129.0px;top:104.7px;width:426px;height:36.500px"><div class="t" style="left:10px;top:6px;font-size:18px;color:#4f87d6">'Candidate list'.G3:G11</div></div>
<svg class="abs" style="left:527.5px;top:113.5px" width="24" height="25" viewBox="0 0 24 25" fill="none">
<rect x="0.800" y="1" width="17.400" height="14.500" stroke="#8d8d8d" stroke-width="1.400" fill="#f4f4f4"/>
<path d="M0.800 5.800 H18.200 M0.800 10.600 H18.200 M9.500 1 V15.500" stroke="#8d8d8d" stroke-width="1.300"/>
<path d="M12 12.200 L21.200 15.600 L17.800 17.200 L21.600 21.800 L19.600 23.400 L16 18.800 L13.800 21.600 Z" fill="#3f8be0"/>
</svg>
<div class="sel" style="left:19.0px;top:167.0px;width:223px"><div class="t" style="top:8.2px">Text</div><svg width="13" height="8" viewBox="0 0 13 8"><path d="M1 1 L6.500 6.500 L12 1" fill="none" stroke="#555" stroke-width="1.700"/></svg></div>
<div class="sel" style="left:250.0px;top:167.0px;width:231px"><div class="t" style="top:8.2px">Contains</div><svg width="13" height="8" viewBox="0 0 13 8"><path d="M1 1 L6.500 6.500 L12 1" fill="none" stroke="#555" stroke-width="1.700"/></svg></div>
<div class="inp" style="left:19.0px;top:212.8px;width:462px"><div class="t" style="letter-spacing:0px">Selected</div></div>
<div class="ftb" style="top:168.8px">
<div class="cell" style="left:0;width:36px;background:#ebebeb"></div><div class="cell" style="left:36px;width:37px"></div><div class="cell" style="left:73px;width:36px"></div><div class="cell" style="left:109px;width:37.500px"></div><div class="cell" style="left:146.500px;width:36px"></div><div class="cell" style="left:182.500px;width:37.500px;background:#ebebeb;border-right:none"></div>
<div class="g" style="left:-1.8999999999999986px;width:40px;text-align:center;top:4.5px;font-size:21.5px;line-height:26px;transform:scaleX(1.22);">B</div>
<div class="g" style="left:35.2px;width:40px;text-align:center;top:3.5px;font-size:25px;line-height:26px;font-family:'Liberation Serif',serif;font-style:italic;">I</div>
<div class="g" style="left:71.9px;width:40px;text-align:center;top:4px;font-size:20.5px;line-height:26px;">U</div>
<div class="abs" style="left:84.400px;top:25.500px;width:15px;height:1.800px;background:#333"></div>
<div class="g" style="left:108.19999999999999px;width:40px;text-align:center;top:4.5px;font-size:20.5px;line-height:26px;">S</div>
<div class="abs" style="left:119.500px;top:17.500px;width:17.500px;height:1.400px;background:#333"></div>
<svg class="abs" style="left:155px;top:5px" width="24" height="22" viewBox="0 0 24 22" fill="none">
<defs><clipPath id="bk2"><rect x="-7.400" y="-5.400" width="14.800" height="11" rx="2" transform="translate(9.300 9.700) rotate(34)"/></clipPath></defs>
<rect x="0" y="9" width="24" height="13" fill="#3c3c3c" clip-path="url(#bk2)"/>
<rect x="-7.400" y="-5.400" width="14.800" height="11" rx="2" transform="translate(9.300 9.700) rotate(34)" stroke="#3c3c3c" stroke-width="1.500"/>
<path d="M-8.200 -5.600 H8.200" transform="translate(9.300 9.700) rotate(34)" stroke="#3c3c3c" stroke-width="2" stroke-linecap="round"/>
<path d="M5.200 1.800 Q6.800 -0.600 8.800 1.200 L10.600 6.400" stroke="#3c3c3c" stroke-width="1.400" stroke-linecap="round"/>
<circle cx="10.600" cy="6.800" r="1.400" fill="#3c3c3c"/>
<path d="M17.500 11.800 Q20.400 16.200 17.500 17 Q14.600 16.200 17.500 11.800 Z" fill="#3c3c3c"/>
</svg>
<div class="abs" style="left:151.500px;top:31px;width:26.600px;height:3.800px;background:#9cdeb4"></div>
<div class="g" style="left:181.9px;width:40px;text-align:center;top:3.5px;font-size:22.5px;line-height:26px;">A</div>
<div class="abs" style="left:191.300px;top:31px;width:21.200px;height:3.800px;background:#000"></div>
</div>
<div class="erb" style="top:168.8px"><svg class="abs" style="left:7px;top:5.5px" width="24" height="22" viewBox="0 0 24 22" fill="none" stroke="#3c3c3c" stroke-width="1.400" stroke-linejoin="round">
<path d="M13.200 1.600 L2 12.200 Q1 13.300 2 14.400 L7 19.600 H12.500 L21.500 9.800 Q22.300 8.800 21.400 7.900 L15 1.600 Q14.100 0.900 13.200 1.600 Z" fill="#fff"/>
<path d="M5.600 8.800 L14.400 17.400 L12.500 19.600 H7 L2 14.400 Q1 13.300 2 12.200 Z" fill="#e8566a" stroke="none"/>
<path d="M9 19.800 H23" stroke-linecap="round"/>
</svg></div>
<svg class="abs" style="left:792.5px;top:187.5px" width="11" height="10" viewBox="0 0 11 10"><path d="M1 0.800 L10 9.200 M10 0.800 L1 9.200" stroke="#999" stroke-width="1.900" fill="none"/></svg>
<div class="pv" style="top:212.8px;background:#9cdeb4"><div class="t">Preview</div><svg width="13" height="8" viewBox="0 0 13 8"><path d="M1 1 L6.200 6.300 L11.400 1" fill="none" stroke="#222" stroke-width="1.900"/></svg></div>
<div class="dash" style="top:264.9px"></div>
<div class="sel" style="left:19.0px;top:282.5px;width:223px"><div class="t" style="top:6.4px">Text</div><svg width="13" height="8" viewBox="0 0 13 8"><path d="M1 1 L6.500 6.500 L12 1" fill="none" stroke="#555" stroke-width="1.700"/></svg></div>
<div class="sel" style="left:250.0px;top:282.5px;width:231px"><div class="t" style="top:6.4px">Contains</div><svg width="13" height="8" viewBox="0 0 13 8"><path d="M1 1 L6.500 6.500 L12 1" fill="none" stroke="#555" stroke-width="1.700"/></svg></div>
<div class="inp" style="left:19.0px;top:328.3px;width:462px"><div class="t" style="letter-spacing:0.26px">Interview in progress</div></div>
<div class="ftb" style="top:284.3px">
<div class="cell" style="left:0;width:36px;background:#ebebeb"></div><div class="cell" style="left:36px;width:37px"></div><div class="cell" style="left:73px;width:36px"></div><div class="cell" style="left:109px;width:37.500px"></div><div class="cell" style="left:146.500px;width:36px"></div><div class="cell" style="left:182.500px;width:37.500px;background:#ebebeb;border-right:none"></div>
<div class="g" style="left:-1.8999999999999986px;width:40px;text-align:center;top:3.8px;font-size:21.5px;line-height:26px;transform:scaleX(1.22);">B</div>
<div class="g" style="left:35.2px;width:40px;text-align:center;top:2.8px;font-size:25px;line-height:26px;font-family:'Liberation Serif',serif;font-style:italic;">I</div>
<div class="g" style="left:71.9px;width:40px;text-align:center;top:3.3px;font-size:20.5px;line-height:26px;">U</div>
<div class="abs" style="left:84.400px;top:25.500px;width:15px;height:1.800px;background:#333"></div>
<div class="g" style="left:108.19999999999999px;width:40px;text-align:center;top:3.8px;font-size:20.5px;line-height:26px;">S</div>
<div class="abs" style="left:119.500px;top:17.500px;width:17.500px;height:1.400px;background:#333"></div>
<svg class="abs" style="left:155px;top:5px" width="24" height="22" viewBox="0 0 24 22" fill="none">
<defs><clipPath id="bk3"><rect x="-7.400" y="-5.400" width="14.800" height="11" rx="2" transform="translate(9.300 9.700) rotate(34)"/></clipPath></defs>
<rect x="0" y="9" width="24" height="13" fill="#3c3c3c" clip-path="url(#bk3)"/>
<rect x="-7.400" y="-5.400" width="14.800" height="11" rx="2" transform="translate(9.300 9.700) rotate(34)" stroke="#3c3c3c" stroke-width="1.500"/>
<path d="M-8.200 -5.600 H8.200" transform="translate(9.300 9.700) rotate(34)" stroke="#3c3c3c" stroke-width="2" stroke-linecap="round"/>
<path d="M5.200 1.800 Q6.800 -0.600 8.800 1.200 L10.600 6.400" stroke="#3c3c3c" stroke-width="1.400" stroke-linecap="round"/>
<circle cx="10.600" cy="6.800" r="1.400" fill="#3c3c3c"/>
<path d="M17.500 11.800 Q20.400 16.200 17.500 17 Q14.600 16.200 17.500 11.800 Z" fill="#3c3c3c"/>
</svg>
<div class="abs" style="left:151.500px;top:31px;width:26.600px;height:3.800px;background:#f8f3c5"></div>
<div class="g" style="left:181.9px;width:40px;text-align:center;top:2.8px;font-size:22.5px;line-height:26px;">A</div>
<div class="abs" style="left:191.300px;top:31px;width:21.200px;height:3.800px;background:#000"></div>
</div>
<div class="erb" style="top:284.3px"><svg class="abs" style="left:7px;top:5.5px" width="24" height="22" viewBox="0 0 24 22" fill="none" stroke="#3c3c3c" stroke-width="1.400" stroke-linejoin="round">
<path d="M13.200 1.600 L2 12.200 Q1 13.300 2 14.400 L7 19.600 H12.500 L21.500 9.800 Q22.300 8.800 21.400 7.900 L15 1.600 Q14.100 0.900 13.200 1.600 Z" fill="#fff"/>
<path d="M5.600 8.800 L14.400 17.400 L12.500 19.600 H7 L2 14.400 Q1 13.300 2 12.200 Z" fill="#e8566a" stroke="none"/>
<path d="M9 19.800 H23" stroke-linecap="round"/>
</svg></div>
<svg class="abs" style="left:792.5px;top:303.0px" width="11" height="10" viewBox="0 0 11 10"><path d="M1 0.800 L10 9.200 M10 0.800 L1 9.200" stroke="#999" stroke-width="1.900" fill="none"/></svg>
<div class="pv" style="top:328.3px;background:#f8f3c5"><div class="t">Preview</div><svg width="13" height="8" viewBox="0 0 13 8"><path d="M1 1 L6.200 6.300 L11.400 1" fill="none" stroke="#222" stroke-width="1.900"/></svg></div>
<div class="dash" style="top:380.6px"></div>
<div class="sel" style="left:19.0px;top:398.0px;width:223px"><div class="t" style="top:6.4px">Text</div><svg width="13" height="8" viewBox="0 0 13 8"><path d="M1 1 L6.500 6.500 L12 1" fill="none" stroke="#555" stroke-width="1.700"/></svg></div>
<div class="sel" style="left:250.0px;top:398.0px;width:231px"><div class="t" style="top:6.4px">Contains</div><svg width="13" height="8" viewBox="0 0 13 8"><path d="M1 1 L6.500 6.500 L12 1" fill="none" stroke="#555" stroke-width="1.700"/></svg></div>
<div class="inp" style="left:19.0px;top:443.8px;width:462px"><div class="t" style="letter-spacing:0px">Rejected</div></div>
<div class="ftb" style="top:399.8px">
<div class="cell" style="left:0;width:36px;background:#ebebeb"></div><div class="cell" style="left:36px;width:37px"></div><div class="cell" style="left:73px;width:36px"></div><div class="cell" style="left:109px;width:37.500px"></div><div class="cell" style="left:146.500px;width:36px"></div><div class="cell" style="left:182.500px;width:37.500px;background:#ebebeb;border-right:none"></div>
<div class="g" style="left:-1.8999999999999986px;width:40px;text-align:center;top:3.8px;font-size:21.5px;line-height:26px;transform:scaleX(1.22);">B</div>
<div class="g" style="left:35.2px;width:40px;text-align:center;top:2.8px;font-size:25px;line-height:26px;font-family:'Liberation Serif',serif;font-style:italic;">I</div>
<div class="g" style="left:71.9px;width:40px;text-align:center;top:3.3px;font-size:20.5px;line-height:26px;">U</div>
<div class="abs" style="left:84.400px;top:25.500px;width:15px;height:1.800px;background:#333"></div>
<div class="g" style="left:108.19999999999999px;width:40px;text-align:center;top:3.8px;font-size:20.5px;line-height:26px;">S</div>
<div class="abs" style="left:119.500px;top:17.500px;width:17.500px;height:1.400px;background:#333"></div>
<svg class="abs" style="left:155px;top:5px" width="24" height="22" viewBox="0 0 24 22" fill="none">
<defs><clipPath id="bk4"><rect x="-7.400" y="-5.400" width="14.800" height="11" rx="2" transform="translate(9.300 9.700) rotate(34)"/></clipPath></defs>
<rect x="0" y="9" width="24" height="13" fill="#3c3c3c" clip-path="url(#bk4)"/>
<rect x="-7.400" y="-5.400" width="14.800" height="11" rx="2" transform="translate(9.300 9.700) rotate(34)" stroke="#3c3c3c" stroke-width="1.500"/>
<path d="M-8.200 -5.600 H8.200" transform="translate(9.300 9.700) rotate(34)" stroke="#3c3c3c" stroke-width="2" stroke-linecap="round"/>
<path d="M5.200 1.800 Q6.800 -0.600 8.800 1.200 L10.600 6.400" stroke="#3c3c3c" stroke-width="1.400" stroke-linecap="round"/>
<circle cx="10.600" cy="6.800" r="1.400" fill="#3c3c3c"/>
<path d="M17.500 11.800 Q20.400 16.200 17.500 17 Q14.600 16.200 17.500 11.800 Z" fill="#3c3c3c"/>
</svg>
<div class="abs" style="left:151.500px;top:31px;width:26.600px;height:3.800px;background:#f6cccf"></div>
<div class="g" style="left:181.9px;width:40px;text-align:center;top:2.8px;font-size:22.5px;line-height:26px;">A</div>
<div class="abs" style="left:191.300px;top:31px;width:21.200px;height:3.800px;background:#000"></div>
</div>
<div class="erb" style="top:399.8px"><svg class="abs" style="left:7px;top:5.5px" width="24" height="22" viewBox="0 0 24 22" fill="none" stroke="#3c3c3c" stroke-width="1.400" stroke-linejoin="round">
<path d="M13.200 1.600 L2 12.200 Q1 13.300 2 14.400 L7 19.600 H12.500 L21.500 9.800 Q22.300 8.800 21.400 7.900 L15 1.600 Q14.100 0.900 13.200 1.600 Z" fill="#fff"/>
<path d="M5.600 8.800 L14.400 17.400 L12.500 19.600 H7 L2 14.400 Q1 13.300 2 12.200 Z" fill="#e8566a" stroke="none"/>
<path d="M9 19.800 H23" stroke-linecap="round"/>
</svg></div>
<svg class="abs" style="left:792.5px;top:418.5px" width="11" height="10" viewBox="0 0 11 10"><path d="M1 0.800 L10 9.200 M10 0.800 L1 9.200" stroke="#999" stroke-width="1.900" fill="none"/></svg>
<div class="pv" style="top:443.8px;background:#f6cccf"><div class="t">Preview</div><svg width="13" height="8" viewBox="0 0 13 8"><path d="M1 1 L6.200 6.300 L11.400 1" fill="none" stroke="#222" stroke-width="1.900"/></svg></div>
<div class="dash" style="top:494.5px"></div>
<div class="t" style="left:27.9px;top:541.5px;font-size:17.600px;line-height:22px;color:#1fa866;text-decoration:underline;text-decoration-thickness:1.500px;text-underline-offset:2px;-webkit-text-stroke:.6px #1fa866">Add Rule</div>
<div class="abs" style="left:595.0px;top:524.5px;width:74px;height:38px;border-radius:19px;background:#18ae6b"></div>
<div class="t" style="left:595.0px;top:535.0px;width:74px;text-align:center;font-size:17.500px;line-height:22px;color:#fff;-webkit-text-stroke:.6px #fff;letter-spacing:.5px">OK</div>
<div class="abs" style="left:682.5px;top:524.5px;width:105.500px;height:38px;border-radius:19px;background:#f6f6f6;border:1.500px solid #dcdcdc"></div>
<div class="t" style="left:682.5px;top:534.8px;width:105.500px;text-align:center;font-size:17.500px;line-height:22px;color:#333;letter-spacing:.45px">Cancel</div>
</div>
</div>
</body>
</html>
